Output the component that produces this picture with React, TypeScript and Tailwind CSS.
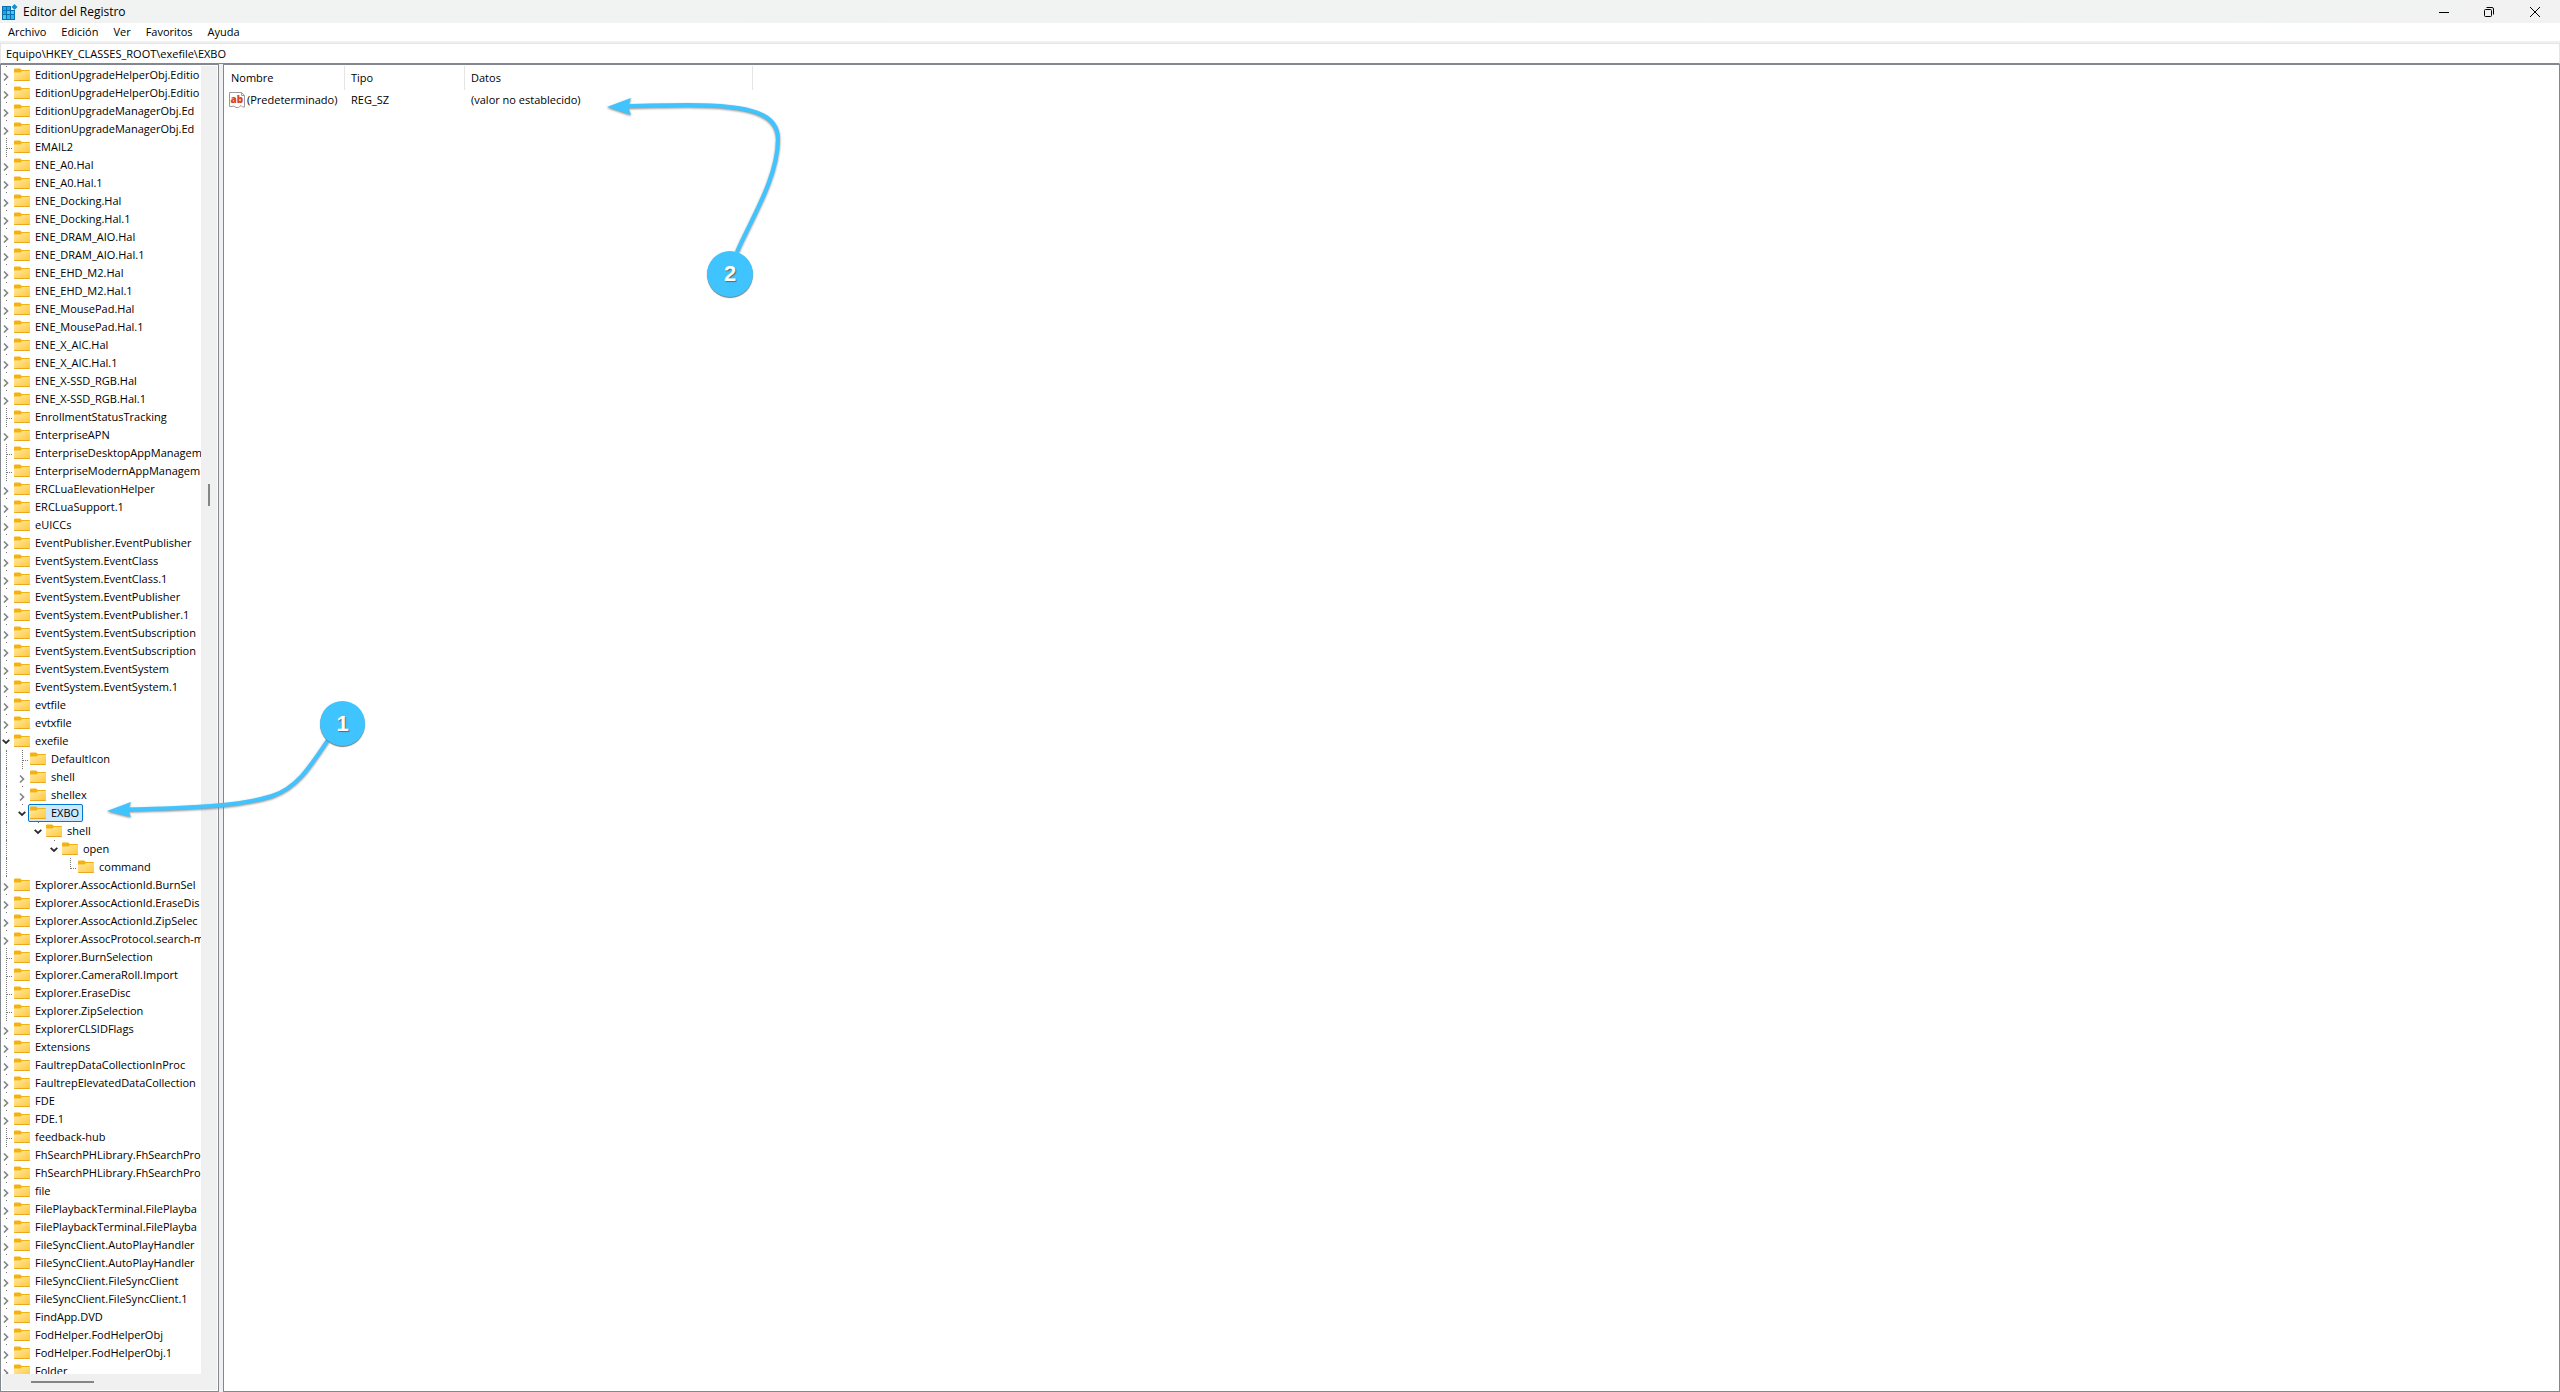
import React from 'react';

type State = 'closed' | 'open' | 'leaf';

interface Node {
  name: string;
  state: State;
  depth: number;
  last?: boolean;
  selected?: boolean;
}

const c = (name: string, depth = 0): Node => ({ name, depth, state: 'closed' });
const l = (name: string, depth = 0, last = false): Node => ({ name, depth, last, state: 'leaf' });
const o = (name: string, depth = 0, selected = false): Node => ({ name, depth, selected, state: 'open' });

const nodes: Node[] = [
  c('EditionUpgradeHelperObj.Editio'),
  c('EditionUpgradeHelperObj.Editio'),
  c('EditionUpgradeManagerObj.Ed'),
  c('EditionUpgradeManagerObj.Ed'),
  l('EMAIL2'),
  c('ENE_A0.Hal'),
  c('ENE_A0.Hal.1'),
  c('ENE_Docking.Hal'),
  c('ENE_Docking.Hal.1'),
  c('ENE_DRAM_AIO.Hal'),
  c('ENE_DRAM_AIO.Hal.1'),
  c('ENE_EHD_M2.Hal'),
  c('ENE_EHD_M2.Hal.1'),
  c('ENE_MousePad.Hal'),
  c('ENE_MousePad.Hal.1'),
  c('ENE_X_AIC.Hal'),
  c('ENE_X_AIC.Hal.1'),
  c('ENE_X-SSD_RGB.Hal'),
  c('ENE_X-SSD_RGB.Hal.1'),
  l('EnrollmentStatusTracking'),
  c('EnterpriseAPN'),
  l('EnterpriseDesktopAppManagem'),
  l('EnterpriseModernAppManagem'),
  c('ERCLuaElevationHelper'),
  c('ERCLuaSupport.1'),
  c('eUICCs'),
  c('EventPublisher.EventPublisher'),
  c('EventSystem.EventClass'),
  c('EventSystem.EventClass.1'),
  c('EventSystem.EventPublisher'),
  c('EventSystem.EventPublisher.1'),
  c('EventSystem.EventSubscription'),
  c('EventSystem.EventSubscription'),
  c('EventSystem.EventSystem'),
  c('EventSystem.EventSystem.1'),
  c('evtfile'),
  c('evtxfile'),
  o('exefile'),
  l('DefaultIcon', 1),
  c('shell', 1),
  c('shellex', 1),
  o('EXBO', 1, true),
  o('shell', 2),
  o('open', 3),
  l('command', 4, true),
  c('Explorer.AssocActionId.BurnSel'),
  c('Explorer.AssocActionId.EraseDis'),
  c('Explorer.AssocActionId.ZipSelec'),
  c('Explorer.AssocProtocol.search-m'),
  l('Explorer.BurnSelection'),
  l('Explorer.CameraRoll.Import'),
  l('Explorer.EraseDisc'),
  l('Explorer.ZipSelection'),
  c('ExplorerCLSIDFlags'),
  c('Extensions'),
  c('FaultrepDataCollectionInProc'),
  c('FaultrepElevatedDataCollection'),
  c('FDE'),
  c('FDE.1'),
  l('feedback-hub'),
  c('FhSearchPHLibrary.FhSearchPro'),
  c('FhSearchPHLibrary.FhSearchPro'),
  c('file'),
  c('FilePlaybackTerminal.FilePlayba'),
  c('FilePlaybackTerminal.FilePlayba'),
  c('FileSyncClient.AutoPlayHandler'),
  c('FileSyncClient.AutoPlayHandler'),
  c('FileSyncClient.FileSyncClient'),
  c('FileSyncClient.FileSyncClient.1'),
  c('FindApp.DVD'),
  c('FodHelper.FodHelperObj'),
  c('FodHelper.FodHelperObj.1'),
  c('Folder'),
];

const menus = ['Archivo', 'Edición', 'Ver', 'Favoritos', 'Ayuda'];

const AppIcon: React.FC = () => (
  <svg width="16" height="16" viewBox="0 0 16 16" aria-hidden="true">
    <path d="M0 2h9v4h4v10H0z" fill="#0b6fb0" />
    <path d="M1 3h3v3H1zM5 3h3v3H5zM1 7h3v3H1z" fill="#1aa7e4" />
    <path d="M5 7h3v3H5zM9 7h3v3H9zM1 11h3v4H1z" fill="#45c8f7" />
    <path d="M5 11h3v4H5zM9 11h3v4H9z" fill="#2fb6ee" />
    <path d="M12.500 0l3 3-3 3-3-3z" fill="#1490d4" />
  </svg>
);

const Folder: React.FC = () => (
  <svg width="16" height="14" viewBox="0 0 16 14" className="shrink-0" aria-hidden="true">
    <defs>
      <linearGradient id="folder" x1="0" y1="0" x2="1" y2="1">
        <stop offset="0" stopColor="#ffe9a6" />
        <stop offset="1" stopColor="#ffc937" />
      </linearGradient>
    </defs>
    <path d="M0 1.500Q0 .500 1 .500h5l2 1.500h7q1 0 1 1v3H0z" fill="#f5b20f" />
    <path d="M0 4.500h6.500l1.500-1.500h8v9.500q0 .500-1 .500H1q-1 0-1-.500z" fill="url(#folder)" />
    <path d="M0 12h16q0 1-1 1H1q-1 0-1-1z" fill="#e9a820" />
  </svg>
);

const Twisty: React.FC<{ open: boolean }> = ({ open }) => (
  <svg width="8" height="18" viewBox="0 0 8 18" fill="none" className="shrink-0" aria-hidden="true">
    <path d="M4.500 0v1" stroke="#777" />
    {open ? (
      <path d="M.700 7.800L4 11l3.300-3.200" stroke="#2b2b2b" strokeWidth="1.800" />
    ) : (
      <path d="M2 7.500L5.500 11 2 14.500" stroke="#858585" strokeWidth="1.700" />
    )}
  </svg>
);

const Row: React.FC<{ node: Node }> = ({ node }) => (
  <li className="flex h-[18px] items-center whitespace-nowrap">
    {Array.from({ length: node.depth }, (_, i) => (
      <span key={i} className="flex h-full w-4 shrink-0 pl-1">
        {i === 0 && <i className="h-full border-l border-dotted border-[#777]" />}
      </span>
    ))}
    <span className="flex h-full w-[10px] shrink-0">
      {node.state === 'leaf' ? (
        <svg width="11" height="18" viewBox="0 0 11 18" fill="none" stroke="#777" strokeDasharray="1 1" className="shrink-0" aria-hidden="true">
          <path d={node.last ? 'M4.500 0v11' : 'M4.500 0v18'} />
          <path d="M5 10.500h6" />
        </svg>
      ) : (
        <Twisty open={node.state === 'open'} />
      )}
    </span>
    <span
      className={
        node.selected
          ? 'flex h-[18px] items-center gap-[3px] rounded-xs bg-[#cce8ff] px-[2px] outline outline-[#0078d4] -outline-offset-1'
          : 'flex h-[18px] items-center gap-[3px] px-[2px]'
      }
    >
      <Folder />
      <span className="px-[2px]">{node.name}</span>
    </span>
  </li>
);

const Badge: React.FC<{ label: string; className: string }> = ({ label, className }) => (
  <span
    className={`absolute flex items-center justify-center rounded-full bg-[#40c4ff] font-['Liberation_Sans'] text-[22px] font-bold text-white shadow-[0_1px_1px_#777] [text-shadow:1px_1px_1px_#666] ${className}`}
  >
    {label}
  </span>
);

const App: React.FC = () => {
  return (
    <div className="relative flex h-screen flex-col overflow-hidden bg-[#f0f0f0] font-['Open_Sans','Noto_Sans',sans-serif] text-[11px] leading-[18px] text-black">
      {/* Title bar */}
      <header className="flex h-[23px] shrink-0 items-center bg-linear-to-r from-[#f0f3f2] to-[#f2f2f2] pl-[2px]">
        <AppIcon />
        <h1 className="flex-1 pl-[5px] text-[12px]">Editor del Registro</h1>
        <div className="flex h-full">
          <button aria-label="Minimizar" className="flex w-[46px] items-center justify-center">
            <svg width="10" height="10" stroke="#000"><path d="M0 5.500h10" /></svg>
          </button>
          <button aria-label="Restaurar" className="flex w-[43px] items-center justify-center">
            <svg width="10" height="10" fill="none" stroke="#000">
              <rect x=".5" y="2.500" width="7" height="7" rx="1" />
              <path d="M2.500.500H8q1.500 0 1.500 1.500v5.500" />
            </svg>
          </button>
          <button aria-label="Cerrar" className="flex w-[50px] items-center justify-center">
            <svg width="10" height="10" stroke="#000"><path d="M0 0l10 10M10 0L0 10" /></svg>
          </button>
        </div>
      </header>

      {/* Menu */}
      <nav className="flex h-[18px] shrink-0 gap-[15px] bg-white pl-2">
        {menus.map((m) => (
          <button key={m} className="leading-[18px]">{m}</button>
        ))}
      </nav>

      {/* Address */}
      <div className="mt-[2px] flex h-[21px] shrink-0 border border-b-[#828790] border-[#e5e5e5] bg-white">
        <input
          aria-label="Ruta"
          defaultValue="Equipo\HKEY_CLASSES_ROOT\exefile\EXBO"
          className="w-full pl-[5px] outline-none"
        />
      </div>

      <main className="flex min-h-0 flex-1 gap-[4px]">
        {/* Key tree */}
        <section className="flex w-[219px] shrink-0 flex-col border border-[#828790] bg-white p-px">
          <div className="flex min-h-0 flex-1">
            <ul className="min-w-0 flex-1 overflow-hidden">
              {nodes.map((n, i) => (
                <Row key={i} node={n} />
              ))}
            </ul>
            <div className="flex w-4 shrink-0 flex-col items-center bg-[#f0f0f0] pt-[418px]">
              <div className="h-[22px] w-[2px] bg-[#858585]" />
            </div>
          </div>
          <div className="flex h-4 shrink-0 items-center bg-[#f0f0f0] pl-[29px]">
            <div className="h-[2px] w-[63px] bg-[#858585]" />
          </div>
        </section>

        {/* Values */}
        <section className="min-w-0 flex-1 border border-[#828790] bg-white pt-px">
          <table className="w-[529px] table-fixed border-separate border-spacing-0 text-left">
            <thead>
              <tr className="h-6">
                <th className="w-[121px] border-r border-[#e5e5e5] pl-[7px] font-normal">Nombre</th>
                <th className="w-[120px] border-r border-[#e5e5e5] pl-[6px] font-normal">Tipo</th>
                <th className="w-[288px] border-r border-[#e5e5e5] pl-[6px] font-normal">Datos</th>
              </tr>
            </thead>
            <tbody>
              <tr className="h-5 whitespace-nowrap">
                <td className="pl-[5px]">
                  <span className="flex items-center gap-[2px]">
                    <svg width="16" height="16" viewBox="0 0 16 16" className="shrink-0" aria-hidden="true">
                      <path d="M.500.500h12l3 3v11.500h-2l-1.500-1.500-2.500 2H7l-2-1.500-2 .500H.500z" fill="#fff" stroke="#9a9a9a" />
                      <path d="M12.500.500v3h3" fill="none" stroke="#9a9a9a" />
                      <text x="1.500" y="10.500" fontSize="10" fontWeight="800" fill="#d9451f" fontFamily="Open Sans">ab</text>
                    </svg>
                    (Predeterminado)
                  </span>
                </td>
                <td className="pl-[6px]">REG_SZ</td>
                <td className="pl-[6px]">(valor no establecido)</td>
              </tr>
            </tbody>
          </table>
        </section>
      </main>

      {/* Callouts */}
      <svg
        className="pointer-events-none absolute left-0 top-0 drop-shadow-[0_1px_1px_#888]"
        width="820"
        height="840"
        fill="none"
        stroke="#40c4ff"
        strokeWidth="4"
        aria-hidden="true"
      >
        <path d="M328 740C308 770 296 788 272 796C240 806 190 808 126 809.500" />
        <path d="M107 811l24-9-3 8 3 7z" fill="#40c4ff" stroke="none" />
        <path d="M737 252C750 221 778 178 778 139C778 114 752 105 688 105C665 105 640 106 626 106" />
        <path d="M607 107l24-9-3 9 3 8z" fill="#40c4ff" stroke="none" />
      </svg>
      <Badge label="1" className="left-[320px] top-[701px] size-[45px]" />
      <Badge label="2" className="left-[707px] top-[251px] size-[46px]" />
    </div>
  );
};

export default App;
